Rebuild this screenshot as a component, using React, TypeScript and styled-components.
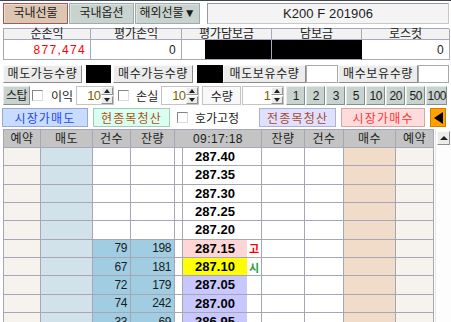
import styled, { createGlobalStyle } from "styled-components";

const GlobalStyle = createGlobalStyle`
  html, body {
    margin: 0;
    padding: 0;
    background: #fff;
    overflow: hidden;
  }
  body {
    font-family: "Liberation Sans", "Noto Sans CJK KR", sans-serif;
    font-size: 12px;
    color: #1c1c1c;
  }
  * {
    box-sizing: border-box;
  }
`;

const Page = styled.div`
  width: 451px;
  height: 322px;
  overflow: hidden;
  border-top: 1px solid #3a4550;
  display: flex;
  flex-direction: column;
`;

const TopBar = styled.div`
  display: flex;
  gap: 1px;
  height: 21px;
  margin-top: 2px;
  padding: 0 2px 0 3px;
`;

const Tab = styled.div<{ $active?: boolean }>`
  width: 65px;
  display: flex;
  align-items: center;
  justify-content: center;
  line-height: 19px;
  font-size: 12px;
  background: ${(p) => (p.$active ? "#dcc6b2" : "#c8d2ce")};
  border: 1px solid ${(p) => (p.$active ? "#a05a5a" : "#a0aaa8")};
  box-shadow: inset 1px 1px 0 ${(p) => (p.$active ? "#ecdccc" : "#dce4e0")};
`;

const SymbolBox = styled.div`
  flex: 1;
  margin-left: 6px;
  display: flex;
  align-items: center;
  justify-content: center;
  background: #f4f4f4;
  border: 1px solid #9a9a9a;
  border-right-color: #c8c8c8;
  border-bottom-color: #c8c8c8;
  font-size: 13px;
  letter-spacing: 0.1px;
`;

const Summary = styled.div`
  display: grid;
  grid-template-columns: 87px 91px 90px 90px 88px;
  grid-template-rows: 11px 20px;
  margin: 4px 2px 0 3px;
  border-top: 1px solid #a8a8bc;
  border-left: 1px solid #a8a8bc;
`;

const SumHead = styled.div`
  background: #f2f2f2;
  border-right: 1px solid #a8a8bc;
  border-bottom: 1px solid #a8a8bc;
  text-align: center;
  line-height: 10px;
  font-size: 12px;
  white-space: nowrap;
`;

const SumValue = styled.div<{ $color?: string; $black?: boolean }>`
  display: flex;
  justify-content: flex-end;
  align-items: center;
  padding-right: 4px;
  font-size: 12px;
  letter-spacing: 1.3px;
  color: ${(p) => p.$color || "#1c1c1c"};
  background: ${(p) => (p.$black ? "#000" : "#fff")};
  border-right: 1px solid ${(p) => (p.$black ? "#000" : "#a8a8bc")};
  border-bottom: 1px solid #a8a8bc;
`;

const BlackFill = styled.div`
  width: 66px;
  height: 100%;
  margin-right: -4px;
  background: #000;
`;

const Row = styled.div<{ $top: number; $h: number }>`
  display: flex;
  align-items: stretch;
  height: ${(p) => p.$h}px;
  margin-top: ${(p) => p.$top}px;
  padding-left: 3px;
  & > * {
    flex-shrink: 0;
    white-space: nowrap;
  }
`;

const BevelButton = styled.div<{ $w: number; $ml?: number }>`
  width: ${(p) => p.$w}px;
  margin-left: ${(p) => p.$ml || 0}px;
  display: flex;
  align-items: center;
  justify-content: center;
  background: #ececec;
  border: 1px solid #fafafa;
  border-right-color: #8c8c8c;
  border-bottom-color: #8c8c8c;
  font-size: 12px;
  letter-spacing: 0.6px;
  line-height: 16px;
`;

const Blank = styled.div<{ $w: number; $ml?: number; $black?: boolean }>`
  width: ${(p) => p.$w}px;
  margin-left: ${(p) => p.$ml || 0}px;
  background: ${(p) => (p.$black ? "#000" : "#fff")};
  border: 1px solid ${(p) => (p.$black ? "#000" : "#a8a8a8")};
`;

const GreenButton = styled.div<{ $w: number; $ml?: number }>`
  width: ${(p) => p.$w}px;
  margin-left: ${(p) => p.$ml || 0}px;
  display: flex;
  align-items: center;
  justify-content: center;
  background: #c8d2ce;
  border: 1px solid #e4ebe8;
  border-right-color: #86908c;
  border-bottom-color: #86908c;
  font-size: 12px;
  letter-spacing: -0.6px;
  line-height: 16px;
`;

const Check = styled.div<{ $ml: number }>`
  width: 11px;
  height: 11px;
  align-self: center;
  margin-left: ${(p) => p.$ml}px;
  background: #fff;
  border: 1px solid #848484;
  border-right-color: #dcdcdc;
  border-bottom-color: #dcdcdc;
`;

const Label = styled.div<{ $ml: number }>`
  margin-left: ${(p) => p.$ml}px;
  display: flex;
  align-items: center;
  font-size: 12px;
`;

const Spin = styled.div<{ $w: number; $ml: number }>`
  width: ${(p) => p.$w}px;
  margin-left: ${(p) => p.$ml}px;
  display: flex;
  background: #fff;
  border: 1px solid #c4c4c4;
`;

const SpinValue = styled.div`
  flex: 1;
  display: flex;
  align-items: center;
  justify-content: flex-end;
  padding-right: 1px;
  color: #7a6400;
  font-size: 13px;
  letter-spacing: -0.8px;
`;

const SpinArrows = styled.div`
  width: 12px;
  display: flex;
  flex-direction: column;
  gap: 1px;
  background: #fff;
`;

const SpinArrow = styled.div<{ $down?: boolean }>`
  flex: 1;
  display: flex;
  align-items: center;
  justify-content: center;
  background: #ececec;
  border: 1px solid #fafafa;
  border-right-color: #909090;
  border-bottom-color: #909090;
  &::after {
    content: "";
    border-left: 3px solid transparent;
    border-right: 3px solid transparent;
    ${(p) =>
      p.$down
        ? "border-top: 4px solid #202020;"
        : "border-bottom: 4px solid #202020;"}
  }
`;

const QtyLabel = styled.div<{ $ml: number }>`
  width: 39px;
  margin-left: ${(p) => p.$ml}px;
  display: flex;
  align-items: center;
  justify-content: center;
  background: #f8f8f8;
  border: 1px solid #c4c4c4;
  font-size: 12px;
`;

const OrderButton = styled.div<{
  $w: number;
  $ml: number;
  $bg: string;
  $fg: string;
  $bd: string;
}>`
  width: ${(p) => p.$w}px;
  margin-left: ${(p) => p.$ml}px;
  display: flex;
  align-items: center;
  justify-content: center;
  background: ${(p) => p.$bg};
  color: ${(p) => p.$fg};
  border: 1px solid ${(p) => p.$bd};
  font-size: 12px;
  letter-spacing: 1.2px;
`;

const ArrowButton = styled.div`
  width: 16px;
  margin-left: 5px;
  display: flex;
  align-items: center;
  justify-content: center;
  background: #ffa200;
  border: 1px solid #d08000;
  &::after {
    content: "";
    border-top: 6px solid transparent;
    border-bottom: 6px solid transparent;
    border-right: 9px solid #000;
  }
`;

const TableArea = styled.div`
  display: flex;
  margin-top: 2px;
  padding-left: 3px;
  flex: 1;
  min-height: 0;
`;

const Grid = styled.div`
  display: grid;
  grid-template-columns: 36px 51px 37px 43px 7px 78px 42px 38px 51px 37px;
  grid-template-rows: 17px;
  grid-auto-rows: 17.33px;
  gap: 1px;
  background: #a6a6b6;
  border: 1px solid #a6a6b6;
  border-bottom: none;
  align-self: flex-start;
`;

const HeadCell = styled.div<{ $span?: number }>`
  grid-column: span ${(p) => p.$span || 1};
  background: #c4c4c4;
  display: flex;
  align-items: center;
  justify-content: center;
  font-size: 12px;
  line-height: 14px;
  letter-spacing: 0.4px;
`;

const Cell = styled.div<{ $bg: string }>`
  background: ${(p) => p.$bg};
  display: flex;
  align-items: center;
  justify-content: flex-end;
  padding-right: 3px;
  font-size: 12px;
  letter-spacing: -0.4px;
  overflow: hidden;
`;

const PriceCell = styled.div`
  display: flex;
  background: #fff;
  overflow: hidden;
`;

const PriceBox = styled.div<{ $bg: string }>`
  width: 64px;
  display: flex;
  align-items: center;
  justify-content: center;
  background: ${(p) => p.$bg};
  font-size: 13px;
  font-weight: bold;
  color: #000;
`;

const Marker = styled.div<{ $color: string }>`
  flex: 1;
  display: flex;
  align-items: center;
  justify-content: center;
  font-size: 11px;
  font-weight: bold;
  color: ${(p) => p.$color};
`;

const Scrollbar = styled.div`
  width: 16px;
  margin-left: 1px;
  background: #fdfdfd;
  border-left: 1px solid #e8e8e8;
  padding: 2px 1px 0 1px;
`;

const ScrollUp = styled.div`
  height: 14px;
  display: flex;
  align-items: center;
  justify-content: center;
  background: #ececec;
  border: 1px solid #fafafa;
  border-right-color: #909090;
  border-bottom-color: #909090;
  &::after {
    content: "";
    border-left: 4px solid transparent;
    border-right: 4px solid transparent;
    border-bottom: 4px solid #202020;
  }
`;

type Tone = "none" | "high" | "now" | "low";

type Quote = {
  price: string;
  cnt?: string;
  qty?: string;
  tone: Tone;
  mark?: string;
};

const quotes: Quote[] = [
  { price: "287.40", tone: "none" },
  { price: "287.35", tone: "none" },
  { price: "287.30", tone: "none" },
  { price: "287.25", tone: "none" },
  { price: "287.20", tone: "none" },
  { price: "287.15", cnt: "79", qty: "198", tone: "high", mark: "고" },
  { price: "287.10", cnt: "67", qty: "181", tone: "now", mark: "시" },
  { price: "287.05", cnt: "72", qty: "179", tone: "low" },
  { price: "287.00", cnt: "74", qty: "242", tone: "low" },
  { price: "286.95", cnt: "33", qty: "69", tone: "low" },
  { price: "286.90", cnt: "41", qty: "120", tone: "low" },
];

const toneBg: Record<Tone, string> = {
  none: "#fff",
  high: "#ffd6d6",
  now: "#ffff00",
  low: "#c8c8ff",
};

const markColor = (mark?: string) => (mark === "고" ? "#ff0000" : "#1ea040");

const steps = ["1", "2", "3", "5", "10", "20", "50", "100"];

const App = () => {
  return (
    <>
      <GlobalStyle />
      <Page>
        <TopBar>
          <Tab $active>국내선물</Tab>
          <Tab>국내옵션</Tab>
          <Tab>해외선물▼</Tab>
          <SymbolBox>K200 F 201906</SymbolBox>
        </TopBar>

        <Summary>
          <SumHead>순손익</SumHead>
          <SumHead>평가손익</SumHead>
          <SumHead>평가담보금</SumHead>
          <SumHead>담보금</SumHead>
          <SumHead>로스컷</SumHead>
          <SumValue $color="#ff0000">877,474</SumValue>
          <SumValue>0</SumValue>
          <SumValue>
            <BlackFill />
          </SumValue>
          <SumValue $black />
          <SumValue>0</SumValue>
        </Summary>

        <Row $top={5} $h={18}>
          <BevelButton $w={79}>매도가능수량</BevelButton>
          <Blank $w={25} $ml={4} $black />
          <BevelButton $w={80} $ml={2}>매수가능수량</BevelButton>
          <Blank $w={26} $ml={4} $black />
          <BevelButton $w={83}>매도보유수량</BevelButton>
          <Blank $w={32} />
          <BevelButton $w={80}>매수보유수량</BevelButton>
          <Blank $w={31} />
        </Row>

        <Row $top={3} $h={19}>
          <GreenButton $w={27}>스탑</GreenButton>
          <Check $ml={2} />
          <Label $ml={8}>이익</Label>
          <Spin $w={38} $ml={3}>
            <SpinValue>10</SpinValue>
            <SpinArrows>
              <SpinArrow />
              <SpinArrow $down />
            </SpinArrows>
          </Spin>
          <Check $ml={4} />
          <Label $ml={7}>손실</Label>
          <Spin $w={38} $ml={3}>
            <SpinValue>10</SpinValue>
            <SpinArrows>
              <SpinArrow />
              <SpinArrow $down />
            </SpinArrows>
          </Spin>
          <QtyLabel $ml={3}>수량</QtyLabel>
          <Spin $w={42} $ml={1}>
            <SpinValue>1</SpinValue>
            <SpinArrows>
              <SpinArrow />
              <SpinArrow $down />
            </SpinArrows>
          </Spin>
          {steps.map((s, i) => (
            <GreenButton key={s} $w={i === 7 ? 21 : 19} $ml={i === 0 ? 2 : 1}>
              {s}
            </GreenButton>
          ))}
        </Row>

        <Row $top={3} $h={19}>
          <OrderButton $w={86} $ml={-1} $bg="#c8dcff" $fg="#2448f0" $bd="#98a8d0">
            시장가매도
          </OrderButton>
          <OrderButton $w={77} $ml={5} $bg="#d8fff0" $fg="#b05010" $bd="#a8c8b8">
            현종목청산
          </OrderButton>
          <Check $ml={7} />
          <Label $ml={7}>호가고정</Label>
          <OrderButton $w={77} $ml={20} $bg="#e0e0ff" $fg="#a84a28" $bd="#b0b0d0">
            전종목청산
          </OrderButton>
          <OrderButton $w={84} $ml={5} $bg="#ffdcdc" $fg="#ff3434" $bd="#d0a8a8">
            시장가매수
          </OrderButton>
          <ArrowButton />
        </Row>

        <TableArea>
          <Grid>
            <HeadCell>예약</HeadCell>
            <HeadCell>매도</HeadCell>
            <HeadCell>건수</HeadCell>
            <HeadCell>잔량</HeadCell>
            <HeadCell $span={2}>09:17:18</HeadCell>
            <HeadCell>잔량</HeadCell>
            <HeadCell>건수</HeadCell>
            <HeadCell>매수</HeadCell>
            <HeadCell>예약</HeadCell>
            {quotes.map((q) => {
              const filled = q.cnt ? "#a0cde2" : "#fff";
              return [
                <Cell key={q.price + "a"} $bg="#f6f3ef" />,
                <Cell key={q.price + "b"} $bg="#d2e2ea" />,
                <Cell key={q.price + "c"} $bg={filled}>
                  {q.cnt}
                </Cell>,
                <Cell key={q.price + "d"} $bg={filled}>
                  {q.qty}
                </Cell>,
                <Cell key={q.price + "e"} $bg="#fff" />,
                <PriceCell key={q.price + "f"}>
                  <PriceBox $bg={toneBg[q.tone]}>{q.price}</PriceBox>
                  <Marker $color={markColor(q.mark)}>{q.mark}</Marker>
                </PriceCell>,
                <Cell key={q.price + "g"} $bg="#fff" />,
                <Cell key={q.price + "h"} $bg="#fff" />,
                <Cell key={q.price + "i"} $bg="#f0dcc8" />,
                <Cell key={q.price + "j"} $bg="#f6f3ef" />,
              ];
            })}
          </Grid>
          <Scrollbar>
            <ScrollUp />
          </Scrollbar>
        </TableArea>
      </Page>
    </>
  );
};

export default App;
